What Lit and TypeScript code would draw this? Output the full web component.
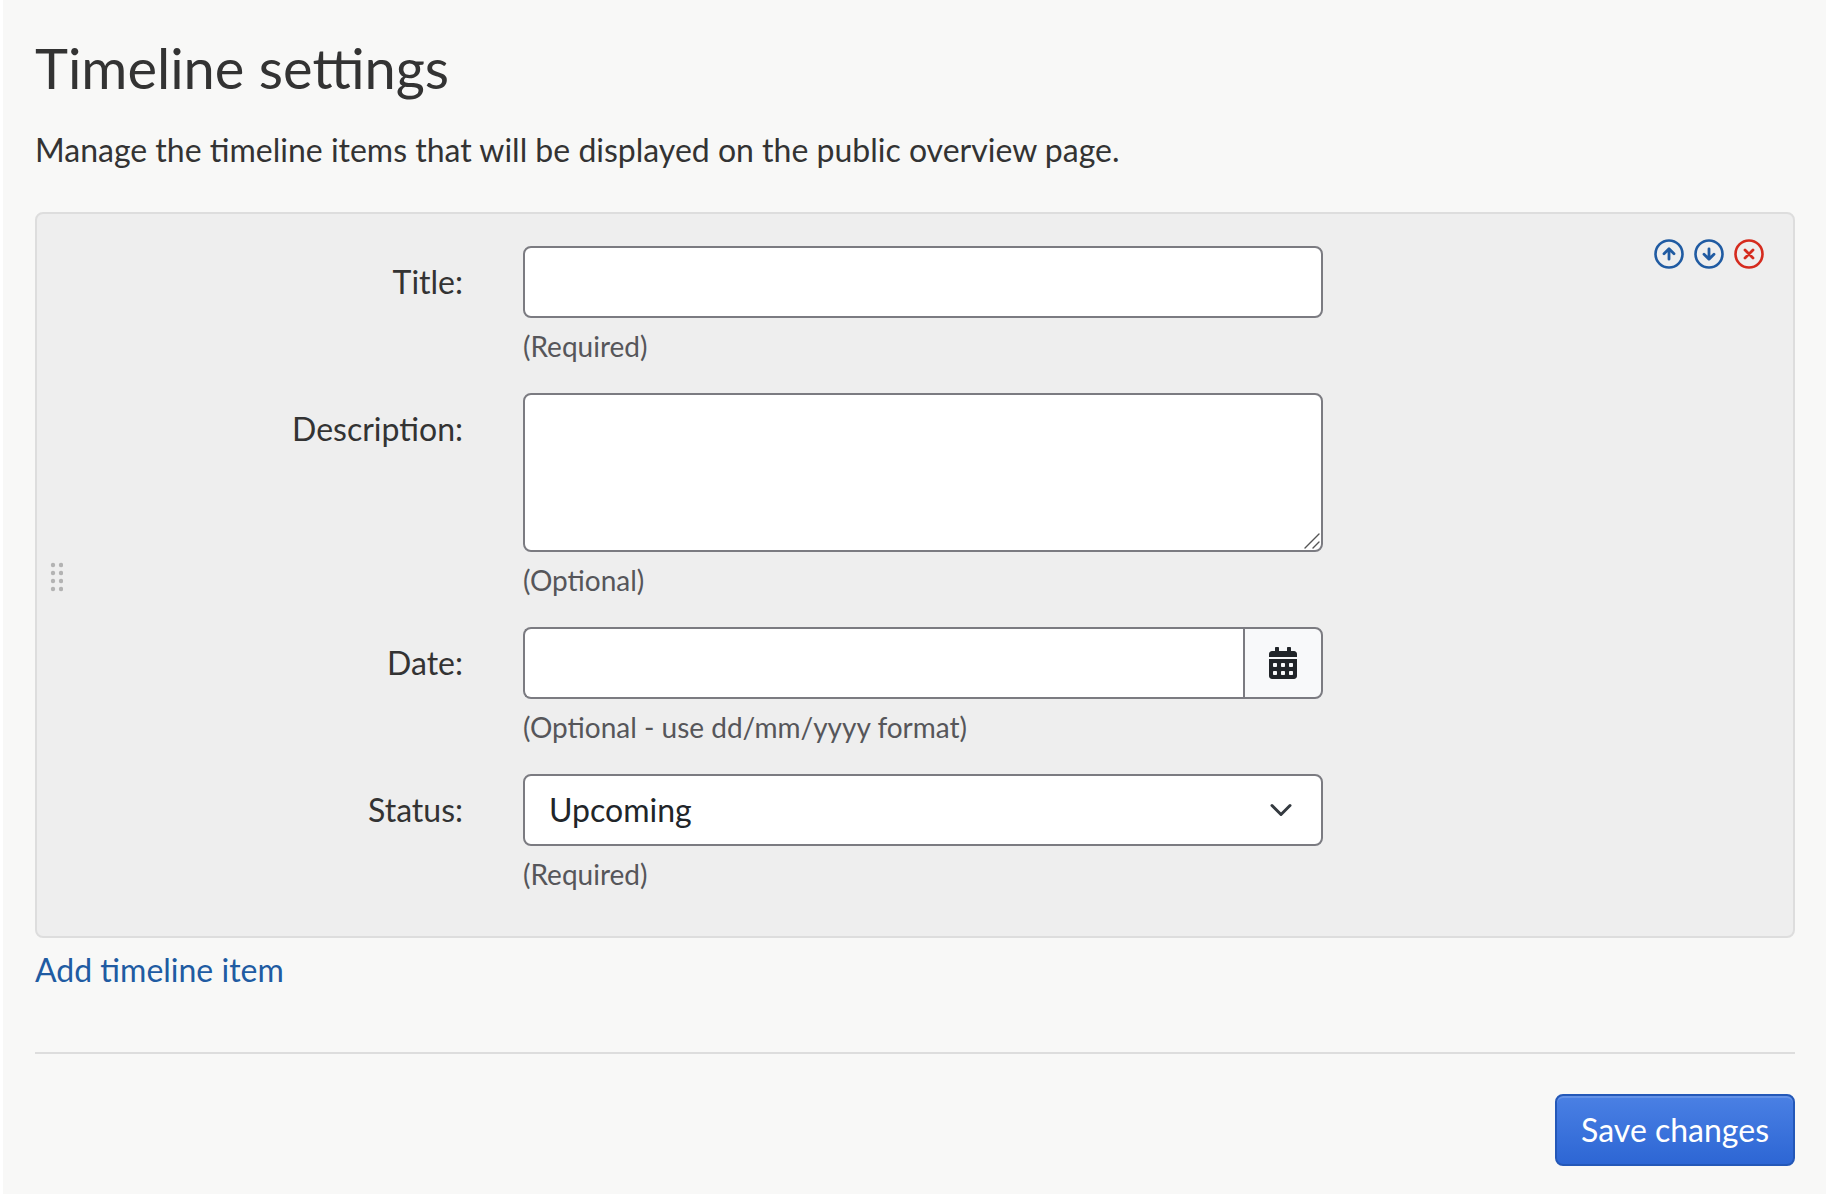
import { LitElement, html, css, svg } from "lit";
import { customElement, property } from "lit/decorators.js";

const arrowUp = svg`<path d="M8 5.4v5.2M5.5 7.9 8 5.4 10.5 7.9" />`;
const arrowDown = svg`<path d="M8 5.4v5.2M5.5 8.1 8 10.6 10.5 8.1" />`;
const cross = svg`<path d="M6 6l4 4M10 6l-4 4" />`;

@customElement("circle-action")
export class CircleAction extends LitElement {
  @property() kind: "up" | "down" | "remove" = "up";
  @property() label = "";

  static styles = css`
    :host {
      display: block;
    }
    .action {
      display: block;
      padding: 0;
      border: 0;
      background: none;
      color: #205ba2;
      cursor: pointer;
    }
    .remove {
      color: #d52b1e;
    }
    .icon {
      display: block;
      width: 32px;
      height: 32px;
      fill: none;
      stroke: currentColor;
      stroke-width: 1.4;
      stroke-linecap: round;
      stroke-linejoin: round;
    }
    .ring {
      stroke-width: 1.3;
    }
  `;

  render() {
    const glyph = this.kind === "up" ? arrowUp : this.kind === "down" ? arrowDown : cross;
    return html`<button class="action ${this.kind}" type="button" aria-label=${this.label}>
      <svg class="icon" viewBox="0 0 16 16" aria-hidden="true">
        <circle class="ring" cx="8" cy="8" r="6.75" />
        ${glyph}
      </svg>
    </button>`;
  }
}

@customElement("timeline-item")
export class TimelineItem extends LitElement {
  static styles = css`
    :host {
      display: block;
    }
    * {
      box-sizing: border-box;
    }
    .card {
      position: relative;
      display: flex;
      align-items: center;
      padding: 32px 10px 15px 12px;
      border: 2px solid #ddd;
      border-radius: 8px;
      background: #eee;
    }
    .handle {
      flex: none;
      width: 14px;
      height: 30px;
      margin-top: -14px;
      fill: #b3b3b3;
      cursor: grab;
    }
    .fields {
      flex: 1;
      min-width: 0;
    }
    .row {
      display: grid;
      grid-template-columns: minmax(0, 3fr) minmax(0, 6fr) minmax(0, 3fr);
    }
    .label {
      padding: 14px 30px;
      line-height: 44px;
      text-align: right;
    }
    .cell {
      padding: 0 30px;
    }
    .control {
      display: block;
      width: 100%;
      height: 72px;
      margin: 0;
      padding: 12px 24px;
      border: 2px solid #7b7b81;
      border-radius: 8px;
      outline: 0;
      background: #fff;
      color: #212529;
      font: inherit;
    }
    .area {
      position: relative;
    }
    .area .control {
      height: 159px;
      resize: vertical;
    }
    .area .control::-webkit-resizer {
      display: none;
    }
    .grip {
      position: absolute;
      right: 3px;
      bottom: 3px;
      width: 16px;
      height: 16px;
      fill: none;
      stroke: #555;
      stroke-width: 1.4;
      stroke-linecap: round;
      pointer-events: none;
    }
    .group {
      display: flex;
    }
    .group .control {
      flex: 1;
      min-width: 0;
      border-right: 0;
      border-radius: 8px 0 0 8px;
    }
    .picker {
      display: flex;
      flex: none;
      align-items: center;
      justify-content: center;
      width: 80px;
      padding: 0;
      border: 2px solid #7b7b81;
      border-radius: 0 8px 8px 0;
      background: #f8f9fa;
      cursor: pointer;
    }
    .calendar {
      width: 28px;
      height: 32px;
      fill: #212529;
    }
    .choice {
      position: relative;
    }
    .choice .control {
      padding: 10px 24px 12px;
      appearance: none;
    }
    .chevron {
      position: absolute;
      top: 24px;
      right: 30px;
      width: 24px;
      height: 24px;
      fill: none;
      stroke: #343a40;
      stroke-width: 2;
      stroke-linecap: round;
      stroke-linejoin: round;
      pointer-events: none;
    }
    .hint {
      height: 75px;
      margin: 0;
      padding-top: 8px;
      color: #56565a;
      font-size: 28px;
      line-height: 40px;
    }
    .actions {
      position: absolute;
      top: 24px;
      right: 28px;
      display: flex;
      gap: 8px;
    }
  `;

  render() {
    return html`
      <div class="card">
        <svg class="handle" viewBox="0 0 14 30" aria-hidden="true">
          ${[3, 11, 19, 27].map((y) => [4, 12].map((x) => svg`<circle cx=${x} cy=${y} r="2.2" />`))}
        </svg>
        <div class="fields">
          <div class="row">
            <label class="label" for="title">Title:</label>
            <div class="cell">
              <input class="control" id="title" type="text" aria-describedby="title-hint" />
              <p class="hint" id="title-hint">(Required)</p>
            </div>
          </div>
          <div class="row">
            <label class="label" for="description">Description:</label>
            <div class="cell">
              <div class="area">
                <textarea class="control" id="description" aria-describedby="description-hint"></textarea>
                <svg class="grip" viewBox="0 0 16 16" aria-hidden="true">
                  <path d="M1 15 15 1M9 15l6-6" />
                </svg>
              </div>
              <p class="hint" id="description-hint">(Optional)</p>
            </div>
          </div>
          <div class="row">
            <label class="label" for="date">Date:</label>
            <div class="cell">
              <div class="group">
                <input class="control" id="date" type="text" aria-describedby="date-hint" />
                <button class="picker" type="button" aria-label="Choose date">
                  <svg class="calendar" viewBox="0 0 448 512" aria-hidden="true">
                    <path
                      d="M0 464c0 26.5 21.5 48 48 48h352c26.5 0 48-21.5 48-48V192H0v272zm320-196c0-6.6 5.4-12 12-12h40c6.6 0 12 5.4 12 12v40c0 6.6-5.4 12-12 12h-40c-6.6 0-12-5.4-12-12v-40zm0 128c0-6.6 5.4-12 12-12h40c6.6 0 12 5.4 12 12v40c0 6.6-5.4 12-12 12h-40c-6.6 0-12-5.4-12-12v-40zM192 268c0-6.6 5.4-12 12-12h40c6.6 0 12 5.4 12 12v40c0 6.6-5.4 12-12 12h-40c-6.6 0-12-5.4-12-12v-40zm0 128c0-6.6 5.4-12 12-12h40c6.6 0 12 5.4 12 12v40c0 6.6-5.4 12-12 12h-40c-6.6 0-12-5.4-12-12v-40zM64 268c0-6.6 5.4-12 12-12h40c6.6 0 12 5.4 12 12v40c0 6.6-5.4 12-12 12H76c-6.6 0-12-5.4-12-12v-40zm0 128c0-6.6 5.4-12 12-12h40c6.6 0 12 5.4 12 12v40c0 6.6-5.4 12-12 12H76c-6.6 0-12-5.4-12-12v-40zM400 64h-48V16c0-8.8-7.2-16-16-16h-32c-8.8 0-16 7.2-16 16v48H160V16c0-8.8-7.2-16-16-16h-32c-8.8 0-16 7.2-16 16v48H48C21.5 64 0 85.5 0 112v48h448v-48c0-26.5-21.5-48-48-48z"
                    />
                  </svg>
                </button>
              </div>
              <p class="hint" id="date-hint">(Optional - use dd/mm/yyyy format)</p>
            </div>
          </div>
          <div class="row">
            <label class="label" for="status">Status:</label>
            <div class="cell">
              <div class="choice">
                <select class="control" id="status" aria-describedby="status-hint">
                  <option>Upcoming</option>
                </select>
                <svg class="chevron" viewBox="0 0 16 16" aria-hidden="true"><path d="m2 5 6 6 6-6" /></svg>
              </div>
              <p class="hint" id="status-hint">(Required)</p>
            </div>
          </div>
        </div>
        <div class="actions">
          <circle-action kind="up" label="Move up"></circle-action>
          <circle-action kind="down" label="Move down"></circle-action>
          <circle-action kind="remove" label="Remove"></circle-action>
        </div>
      </div>
    `;
  }
}

@customElement("app-root")
export class AppRoot extends LitElement {
  static styles = css`
    :host {
      display: block;
      box-sizing: border-box;
      min-height: 100vh;
      padding: 36px 31px 28px 32px;
      border-left: 3px solid #fff;
      background: #f8f8f7;
      color: #333;
      font-family: Lato, "Liberation Sans", sans-serif;
      font-size: 32px;
      line-height: 48px;
    }
    .heading {
      margin: 0;
      font-size: 56px;
      font-weight: 400;
      line-height: 64px;
    }
    .intro {
      margin: 26px 0 38px;
    }
    .add {
      display: inline-block;
      margin-top: 8px;
      color: #205ba2;
      text-decoration: none;
    }
    .footer {
      display: flex;
      justify-content: flex-end;
      margin-top: 58px;
      padding-top: 40px;
      border-top: 2px solid #ddd;
    }
    .save {
      padding: 10px 24px;
      border: 2px solid #2458b8;
      border-radius: 8px;
      background: linear-gradient(#4a80e4, #2d66d4);
      box-shadow: inset 0 2px 0 rgba(255, 255, 255, 0.15);
      color: #fff;
      font: inherit;
      cursor: pointer;
    }
  `;

  render() {
    return html`
      <main>
        <h1 class="heading">Timeline settings</h1>
        <p class="intro">Manage the timeline items that will be displayed on the public overview page.</p>
        <timeline-item></timeline-item>
        <a class="add" href="#add">Add timeline item</a>
        <div class="footer">
          <button class="save" type="button">Save changes</button>
        </div>
      </main>
    `;
  }
}
